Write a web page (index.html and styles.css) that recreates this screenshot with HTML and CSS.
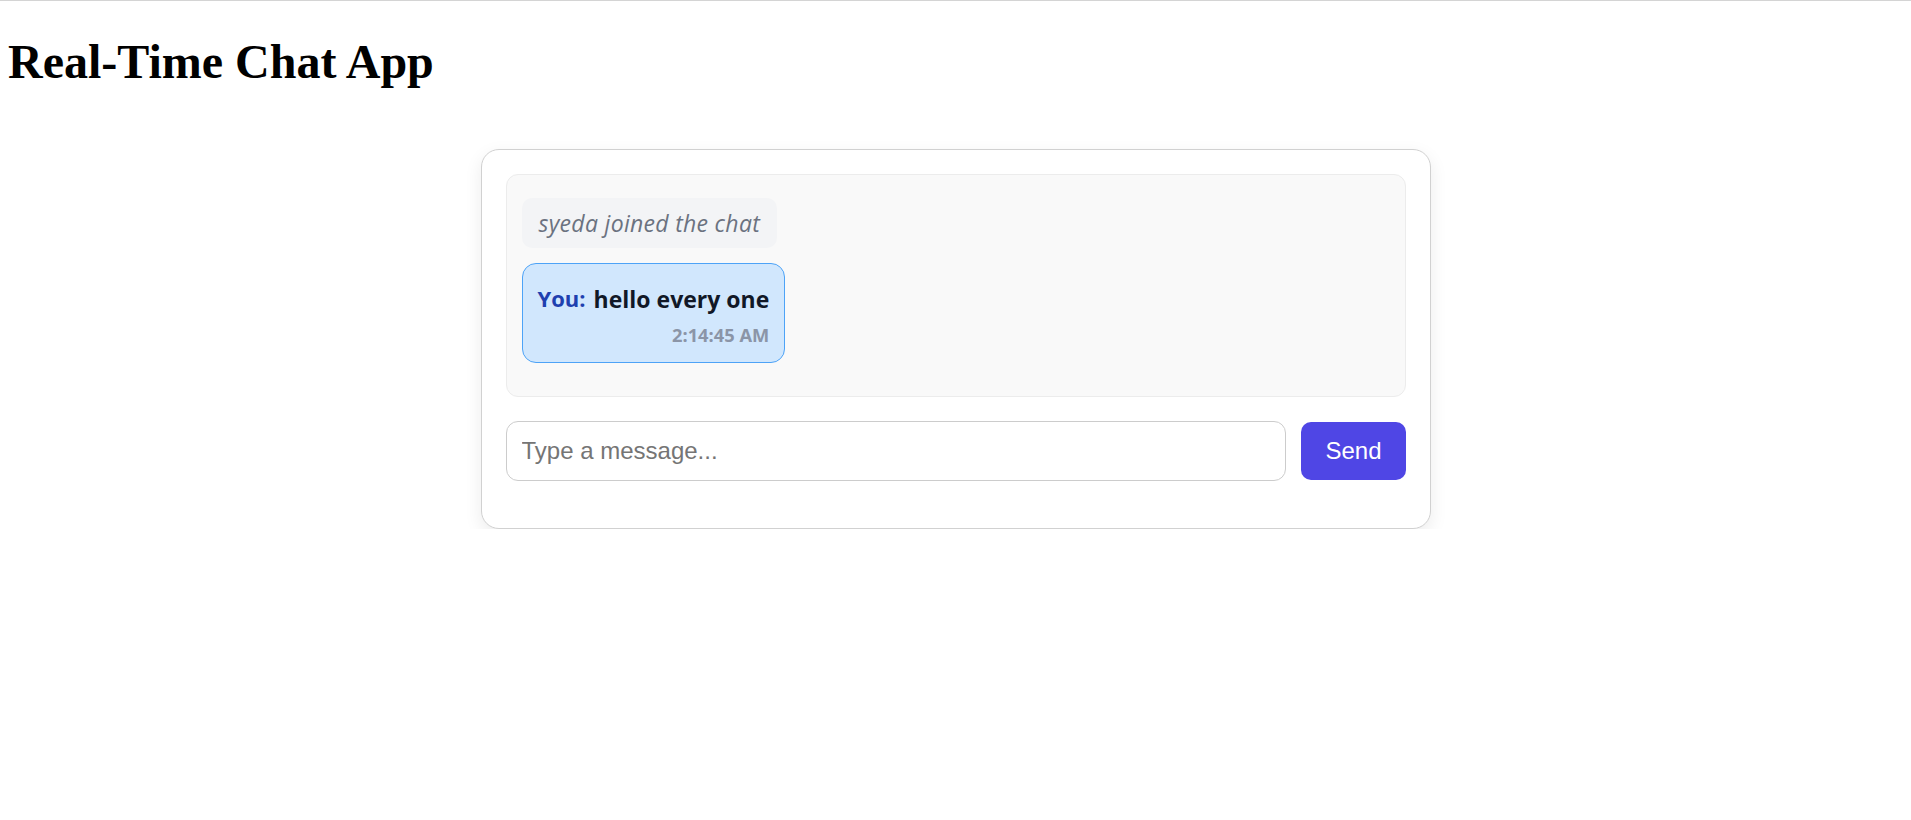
FILE: index.html
```html
<!DOCTYPE html>
<html lang="en">
<head>
<meta charset="utf-8">
<title>Real-Time Chat App</title>
<link rel="stylesheet" href="styles.css">
</head>
<body>
<h1 class="title">Real-Time Chat App</h1>
<main class="app">
  <section class="chat-card">
    <div class="messages">
      <div class="system-msg">syeda joined the chat</div>
      <div class="bubble own">
        <div class="bubble-line">
          <strong class="sender">You:</strong>
          <span class="text">hello every one</span>
        </div>
        <div class="time">2:14:45 AM</div>
      </div>
    </div>
    <form class="composer">
      <input class="composer-input" type="text" placeholder="Type a message...">
      <button class="send-btn" type="button">Send</button>
    </form>
  </section>
</main>
</body>
</html>
```

FILE: styles.css
```css
html {
  border-top: 1px solid #d4d4d4;
}

body {
  margin: 8px;
  font-family: "Liberation Serif", serif;
  background: #ffffff;
}

.title {
  font-family: "Liberation Serif", serif;
  font-size: 48px;
  font-weight: bold;
  margin: 25px 0 32px;
}

.app {
  padding-top: 28px;
}

.chat-card {
  width: 950px;
  box-sizing: border-box;
  margin: 0 auto;
  background: #ffffff;
  border: 1px solid #d1d1d1;
  border-radius: 18px;
  padding: 24px 24px 47px;
  box-shadow: 0 6px 18px rgba(0, 0, 0, 0.08);
}

.messages {
  height: 223px;
  box-sizing: border-box;
  background: #f9f9f9;
  border: 1px solid #ececec;
  border-radius: 12px;
  padding: 23px 15px;
  display: flex;
  flex-direction: column;
  align-items: flex-start;
  gap: 15px;
}

.system-msg {
  font-family: "Open Sans", sans-serif;
  font-style: italic;
  font-size: 23px;
  letter-spacing: 0.3px;
  line-height: 30px;
  padding: 10px 17px;
  background: #f3f4f6;
  color: #6b7280;
  border-radius: 10px;
}

.bubble {
  background: #d1e7fd;
  border: 1px solid #4da3f7;
  border-radius: 14px;
  padding: 19px 15px 15px;
  font-family: "Open Sans", sans-serif;
}

.bubble-line {
  display: flex;
  align-items: flex-start;
  gap: 8px;
}

.sender {
  color: #1e40af;
  font-size: 22px;
  font-weight: 700;
}

.text {
  font-size: 23px;
  font-weight: 700;
  color: #111827;
}

.time {
  text-align: right;
  font-size: 18.3px;
  font-weight: 700;
  color: #8b95a7;
  margin-top: 7px;
}

.composer {
  display: flex;
  align-items: center;
  gap: 15px;
  margin-top: 24px;
}

.composer-input {
  flex: 1;
  min-width: 0;
  font-family: "Liberation Sans", sans-serif;
  font-size: 24px;
  padding: 15px;
  border: 1px solid #cccccc;
  border-radius: 12px;
  outline: none;
  color: #333333;
}

.composer-input::placeholder {
  color: #757575;
}

.send-btn {
  font-family: "Liberation Sans", sans-serif;
  font-size: 24px;
  padding: 15px 24px;
  background: #4f46e5;
  color: #ffffff;
  border: none;
  border-radius: 10px;
}
```
